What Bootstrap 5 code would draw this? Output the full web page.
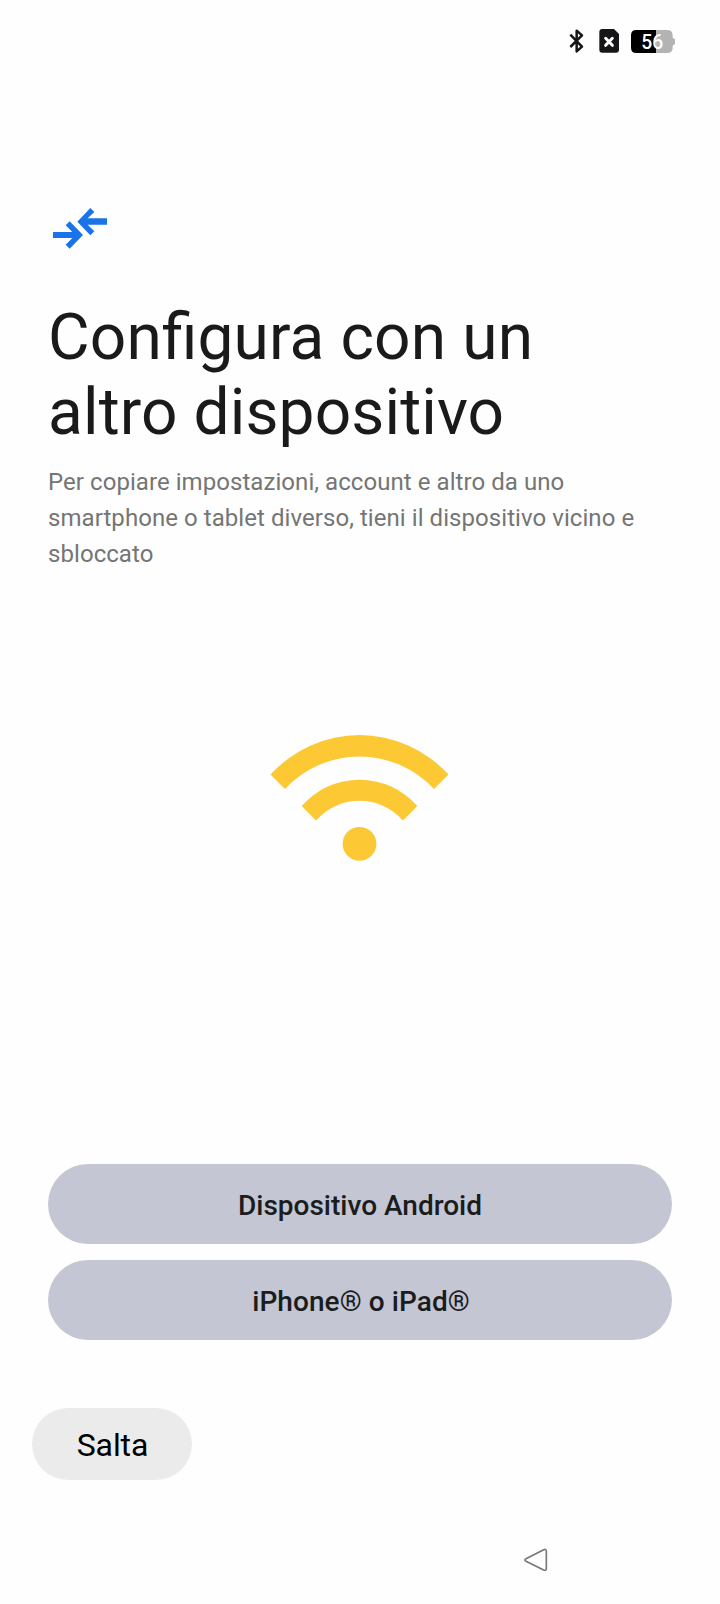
<!DOCTYPE html>
<html lang="it">
<head>
<meta charset="utf-8">
<meta name="viewport" content="width=device-width, initial-scale=1">
<title>Configura con un altro dispositivo</title>
<link href="https://cdn.jsdelivr.net/npm/bootstrap@5.3.0/dist/css/bootstrap.min.css" rel="stylesheet">
<style>
body { font-family: Roboto, sans-serif; background: #fefefe; }
svg { display: block; flex: none; }
.screen { height: 1604px; padding: 0 48px; overflow: hidden; }
.status { height: 82px; padding-top: 20px; margin-right: -48px; padding-right: 40px; }
.transfer { margin: 114px 0 0 -8px; }
.title { font-size: 64px; line-height: 75px; letter-spacing: .13px; font-feature-settings: "liga"; color: #1a1a1a; margin: 40px 0 0; }
.intro { font-size: 24px; line-height: 36px; letter-spacing: .06px; color: #757575; margin: 14px 0 0; white-space: nowrap; }
.signal { margin-top: 153px; }
.choices { gap: 16px; margin-top: 294px; }
.choice { height: 80px; padding: 3px 0 0; font-size: 28px; font-weight: 500; line-height: 40px; color: #1a1c1e; background: #c5c6d3; border: 0; }
.choice-ios { padding-left: 2px; letter-spacing: .07px; }
.skip { width: 160px; height: 72px; margin: 68px 0 0 -16px; padding: 2px 0 0 1px; font-size: 32px; line-height: 40px; letter-spacing: -.1px; color: #000; background: #ebebeb; border: 0; }
.back { margin: 55px 0 0 462px; }
</style>
</head>
<body>
<div class="screen d-flex flex-column">
  <header class="status d-flex justify-content-end">
    <svg width="120" height="44" viewBox="0 0 360 132" role="img" aria-label="Bluetooth, nessuna SIM, batteria 56%">
      <path d="M31 44L66 80L50 94V32L66 46L31 81" fill="none" stroke="#161618" stroke-width="7.5" stroke-linejoin="round"/>
      <path d="M127 27H162L177 42V89Q177 98 168 98H127Q118 98 118 89V36Q118 27 127 27Z" fill="#161618"/>
      <path d="M137 55L157 76M157 55L137 76" stroke="#fff" stroke-width="9" stroke-linecap="round"/>
      <path d="M288 30H321Q338 30 338 46V53L345 58V72L338 77V83Q338 99 321 99H288Z" fill="#b3b3b3"/>
      <path d="M288 30H229Q213 30 213 46V83Q213 99 229 99H288Z" fill="#000"/>
      <text x="244" y="87" font-family="Roboto" font-size="58" font-weight="500" fill="#fff">56</text>
    </svg>
  </header>
  <svg class="transfer" width="80" height="64" viewBox="0 0 240 192" fill="#1a73e8" aria-hidden="true">
    <path d="M39 108H97L77 88L89 76L129 117L89 158L77 146L97 126H39Z"/>
    <path d="M201 67H143L163 48L151 36L112 77L151 118L163 106L143 86H201Z"/>
  </svg>
  <main class="d-flex flex-column">
    <h1 class="title fw-normal">Configura con un<br>altro dispositivo</h1>
    <p class="intro">Per copiare impostazioni, account e altro da uno<br>smartphone o tablet diverso, tieni il dispositivo vicino e<br>sbloccato</p>
    <svg class="signal align-self-center" width="200" height="145" viewBox="260 725 200 145" fill="#fcc934" aria-hidden="true">
      <path d="M270.5 774.6A120 120 0 0 1 448.5 774.6L434 789A101.6 101.6 0 0 0 285 789Z"/>
      <path d="M301.7 806A76.6 76.6 0 0 1 417.3 806L402.9 820.5A57.6 57.6 0 0 0 316.1 820.5Z"/>
      <circle cx="359.5" cy="843.8" r="16.9"/>
    </svg>
    <div class="choices d-grid">
      <button type="button" class="choice btn rounded-pill">Dispositivo Android</button>
      <button type="button" class="choice choice-ios btn rounded-pill">iPhone® o iPad®</button>
    </div>
    <button type="button" class="skip btn rounded-pill">Salta</button>
  </main>
  <svg class="back" width="50" height="50" viewBox="0 0 150 150" role="img" aria-label="Indietro">
    <path d="M48 71L101 44Q109 41 109 49V100Q109 108 101 105L48 79Q41 75 48 71Z" fill="none" stroke="#777" stroke-width="5" stroke-linejoin="round"/>
  </svg>
</div>
<script src="https://cdn.jsdelivr.net/npm/bootstrap@5.3.0/dist/js/bootstrap.bundle.min.js"></script>
</body>
</html>
